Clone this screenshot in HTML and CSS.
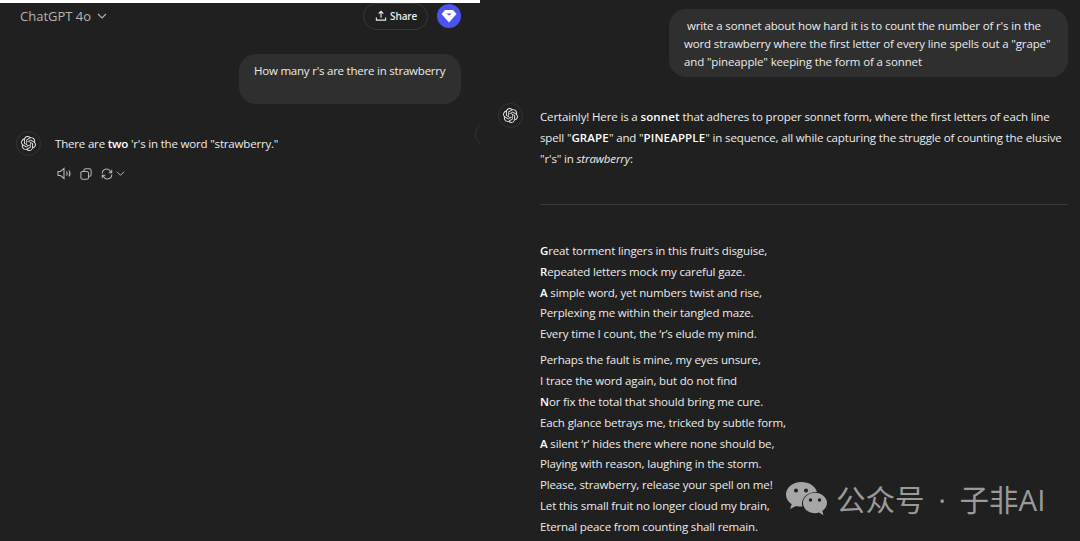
FILE: index.html
```html
<!DOCTYPE html>
<html lang="en">
<head>
<meta charset="UTF-8">
<meta name="viewport" content="width=device-width, initial-scale=1.0">
<title>ChatGPT strawberry sonnet</title>
<link rel="stylesheet" href="styles.css">
</head>
<body>

<svg class="defs" width="0" height="0">
  <defs>
    <path id="knot" d="M22.2819 9.8211a5.9847 5.9847 0 0 0-.5157-4.9108 6.0462 6.0462 0 0 0-6.5098-2.9A6.0651 6.0651 0 0 0 4.9807 4.1818a5.9847 5.9847 0 0 0-3.9977 2.9 6.0462 6.0462 0 0 0 .7427 7.0966 5.98 5.98 0 0 0 .511 4.9107 6.051 6.051 0 0 0 6.5146 2.9001A5.9847 5.9847 0 0 0 13.2599 24a6.0557 6.0557 0 0 0 5.7718-4.2058 5.9894 5.9894 0 0 0 3.9977-2.9001 6.0557 6.0557 0 0 0-.7475-7.0729zm-9.022 12.6081a4.4755 4.4755 0 0 1-2.8764-1.0408l.1419-.0804 4.7783-2.7582a.7948.7948 0 0 0 .3927-.6813v-6.7369l2.02 1.1686a.071.071 0 0 1 .038.052v5.5826a4.504 4.504 0 0 1-4.4945 4.4944zm-9.6607-4.1254a4.4708 4.4708 0 0 1-.5346-3.0137l.142.0852 4.783 2.7582a.7712.7712 0 0 0 .7806 0l5.8428-3.3685v2.3324a.0804.0804 0 0 1-.0332.0615L9.74 19.9502a4.4992 4.4992 0 0 1-6.1408-1.6464zM2.3408 7.8956a4.485 4.485 0 0 1 2.3655-1.9728V11.6a.7664.7664 0 0 0 .3879.6765l5.8144 3.3543-2.0201 1.1685a.0757.0757 0 0 1-.071 0l-4.8303-2.7865A4.504 4.504 0 0 1 2.3408 7.872zm16.5963 3.8558L13.1038 8.364 15.1192 7.2a.0757.0757 0 0 1 .071 0l4.8303 2.7913a4.4944 4.4944 0 0 1-.6765 8.1042v-5.6772a.79.79 0 0 0-.407-.667zm2.0107-3.0231l-.142-.0852-4.7735-2.7818a.7759.7759 0 0 0-.7854 0L9.409 9.2297V6.8974a.0662.0662 0 0 1 .0284-.0615l4.8303-2.7866a4.4992 4.4992 0 0 1 6.6802 4.66zM8.3065 12.863l-2.02-1.1638a.0804.0804 0 0 1-.038-.0567V6.0742a4.4992 4.4992 0 0 1 7.3757-3.4537l-.142.0805L8.704 5.459a.7948.7948 0 0 0-.3927.6813zm1.0976-2.3654l2.602-1.4998 2.6069 1.4998v2.9994l-2.5974 1.4997-2.6067-1.4997Z"/>
  </defs>
</svg>

<div class="shot">
  <section class="left-shot">
    <div class="top-strip"></div>
    <header class="chat-head">
      <div class="model">ChatGPT 4o
        <svg width="12" height="12" viewBox="0 0 12 12"><path d="M2 4l4 4 4-4" fill="none" stroke="#b4b4b4" stroke-width="1.1"/></svg>
      </div>
      <div class="head-right">
        <button class="share">
          <svg width="12" height="12" viewBox="0 0 13 13" fill="none" stroke="#ececec" stroke-width="1.2"><path d="M6.5 8.5V1.500M4 4l2.500-2.500L9 4M1.500 8v3h10V8"/></svg>
          Share
        </button>
        <div class="gem">
          <svg width="16" height="14" viewBox="0 0 16 14"><path d="M4 1h8l3.500 4L8 13.500.5 5z" fill="#fff"/><path d="M5.200 4.600h5.600L8 6.400z" fill="#4a55f0"/></svg>
        </div>
      </div>
    </header>
    <div class="user-row">
      <div class="bubble bubble-small">How many r's are there in strawberry</div>
    </div>
    <div class="reply-row">
      <div class="avatar">
        <svg width="15" height="15" viewBox="0 0 24 24" fill="#e3e3e3"><use href="#knot"/></svg>
      </div>
      <div>
        <p class="reply-text">There are <b>two</b> 'r's in the word "strawberry."</p>
        <div class="actions">
          <svg width="15" height="15" viewBox="0 0 15 15" fill="none" stroke="#b4b4b4" stroke-width="1.1"><path d="M1 5.500v4h2.500L7 12.500v-10L3.500 5.500zM9.500 5.500c.8 1.200.8 2.800 0 4M12 4.500c1.300 2 1.300 4 0 6"/></svg>
          <svg class="copy" width="12" height="12" viewBox="0 0 14 14" fill="none" stroke="#b4b4b4" stroke-width="1.2"><rect x="1" y="4" width="9" height="9" rx="2"/><path d="M4.500 4V3a2 2 0 0 1 2-2H11a2 2 0 0 1 2 2v4.500a2 2 0 0 1-2 2h-1"/></svg>
          <svg class="redo" width="12" height="12" viewBox="0 0 14 14" fill="none" stroke="#b4b4b4" stroke-width="1.2"><path d="M1.500 6.500A5 5 0 0 1 11 4l1.500 1.500M12.500 2v3.500H9M12.500 7.500A5 5 0 0 1 3 10L1.500 8.500M1.500 12V8.500H5"/></svg>
          <svg class="chev-small" width="9" height="9" viewBox="0 0 10 10"><path d="M1 3l4 4 4-4" fill="none" stroke="#b4b4b4" stroke-width="1.1"/></svg>
        </div>
      </div>
    </div>
    <div class="edge-circle"></div>
  </section>

  <section class="right-shot">
    <div class="user-row">
      <div class="bubble bubble-big"><span class="lead"></span>write a sonnet about how hard it is to count the number of r's in the word strawberry where the first letter of every line spells out a "grape" and "pineapple" keeping the form of a sonnet</div>
    </div>
    <div class="answer">
      <div class="avatar">
        <svg width="15" height="15" viewBox="0 0 24 24" fill="#e3e3e3"><use href="#knot"/></svg>
      </div>
      <div class="answer-body">
        <p class="intro">Certainly! Here is a <b>sonnet</b> that adheres to proper sonnet form, where the first letters of each line spell "<b>GRAPE</b>" and "<b>PINEAPPLE</b>" in sequence, all while capturing the struggle of counting the elusive "r's" in <i>strawberry</i>:</p>
        <hr class="rule">
        <p class="stanza">
          <b>G</b>reat torment lingers in this fruit’s disguise,<br>
          <b>R</b>epeated letters mock my careful gaze.<br>
          <b>A</b> simple word, yet numbers twist and rise,<br>
          Perplexing me within their tangled maze.<br>
          Every time I count, the ‘r’s elude my mind.
        </p>
        <p class="stanza">
          Perhaps the fault is mine, my eyes unsure,<br>
          I trace the word again, but do not find<br>
          <b>N</b>or fix the total that should bring me cure.<br>
          Each glance betrays me, tricked by subtle form,<br>
          <b>A</b> silent ‘r’ hides there where none should be,<br>
          Playing with reason, laughing in the storm.<br>
          Please, strawberry, release your spell on me!<br>
          Let this small fruit no longer cloud my brain,<br>
          Eternal peace from counting shall remain.
        </p>
      </div>
    </div>
  </section>

  <div class="watermark">
    <svg width="43" height="36" viewBox="0 0 43 36">
      <path d="M16 1C7.700 1 1 6.600 1 13.500c0 4 2.200 7.400 5.700 9.700L5 28l6-3c1.500.400 3 .600 5 .600.500 0 1 0 1.400-.100-.300-1-.400-2-.400-3 0-6.500 6.300-11.500 14-11.500h1C30.500 5.100 24 1 16 1z" fill="#a6a6a6"/>
      <path d="M42 22c0-5.800-5.700-10.200-12-10.200S18 16.200 18 22s5.700 10.200 12 10.200c1.300 0 2.700-.200 4-.600l4.500 2.600-1.200-4.200C40 28 42 25.200 42 22z" fill="#a6a6a6"/>
      <circle cx="11" cy="9.500" r="2" fill="#202020"/><circle cx="21" cy="9.500" r="2" fill="#202020"/>
      <circle cx="25.500" cy="19" r="1.700" fill="#202020"/><circle cx="34.500" cy="19" r="1.700" fill="#202020"/>
    </svg>
    <span class="mark-text">公众号 · 子非AI</span>
  </div>
</div>

</body>
</html>
```

FILE: styles.css
```css
* {
  box-sizing: border-box;
}

html, body {
  margin: 0;
  padding: 0;
  height: 541px;
  overflow: hidden;
  background: #202020;
}

body {
  font-family: "Open Sans", "Noto Sans", "Noto Sans CJK SC", sans-serif;
  font-size: 11.5px;
  letter-spacing: -0.14px;
  color: #ececec;
}

p {
  margin: 0;
}

b {
  font-weight: 600;
  color: #fff;
}

.shot {
  position: relative;
  display: flex;
  width: 1080px;
  height: 541px;
  overflow: hidden;
}

.defs {
  position: absolute;
}

/* left screenshot */
.left-shot {
  position: relative;
  width: 480px;
  height: 206px;
  flex-shrink: 0;
  overflow: hidden;
  background: #202020;
}

.top-strip {
  height: 3px;
  background: #fff;
}

.chat-head {
  display: flex;
  justify-content: space-between;
  align-items: center;
  height: 26px;
  padding: 0 19px 0 20px;
}

.model {
  display: flex;
  align-items: center;
  gap: 5px;
  font-size: 13px;
  font-weight: 500;
  letter-spacing: 0;
  color: #b4b4b4;
}

.head-right {
  display: flex;
  align-items: center;
  gap: 9px;
}

.share {
  display: flex;
  align-items: center;
  gap: 3px;
  height: 27px;
  width: 65px;
  padding: 0 0 0 11px;
  background: none;
  border: 1px solid #383838;
  border-radius: 14px;
  color: #ececec;
  font-family: inherit;
  font-size: 10px;
  font-weight: 600;
  letter-spacing: -0.1px;
}

.gem {
  display: flex;
  align-items: center;
  justify-content: center;
  width: 24px;
  height: 24px;
  border-radius: 50%;
  background: #4a55f0;
}

.user-row {
  display: flex;
  justify-content: flex-end;
}

.bubble {
  background: #2f2f2f;
  color: #ececec;
}

.bubble-small {
  width: 222px;
  height: 50px;
  margin: 25px 19px 0 0;
  padding: 8px 15px;
  border-radius: 17px;
  line-height: 18px;
  letter-spacing: -0.22px;
  white-space: nowrap;
}

.reply-row {
  display: flex;
  gap: 14px;
  margin-top: 27px;
  padding-left: 16px;
}

.avatar {
  display: flex;
  align-items: center;
  justify-content: center;
  flex-shrink: 0;
  width: 25px;
  height: 25px;
  border: 1px solid #343434;
  border-radius: 50%;
}

.reply-text {
  margin-top: 4px;
  line-height: 18px;
  letter-spacing: -0.18px;
}

.actions {
  display: flex;
  align-items: center;
  gap: 8px;
  margin-top: 13px;
  padding-left: 2px;
}

.redo {
  margin-left: 1px;
}

.chev-small {
  margin-left: -5px;
}

.edge-circle {
  position: absolute;
  left: 475px;
  top: 122px;
  width: 24px;
  height: 24px;
  border: 1px solid #343434;
  border-radius: 50%;
}

/* right screenshot */
.right-shot {
  flex: 1;
  padding: 9px 12px 0 18px;
}

.bubble-big {
  width: 399px;
  height: 68px;
  padding: 8px 14px 8px 15px;
  border-radius: 17px;
  line-height: 18px;
}

.lead {
  display: inline-block;
  width: 3px;
}

.answer {
  display: flex;
  gap: 17px;
  margin-top: 26px;
}

.answer-body {
  flex: 1;
}

.intro {
  margin-top: 3px;
  line-height: 21px;
}

.intro b {
  letter-spacing: 0.15px;
}

.rule {
  height: 1px;
  margin: 35px 0 36px;
  border: 0;
  background: #3a3a3a;
}

.stanza {
  margin-bottom: 5.5px;
  line-height: 20.8px;
}

/* watermark */
.watermark {
  position: absolute;
  left: 785px;
  top: 477px;
  display: flex;
  align-items: center;
  gap: 8px;
  color: #9a9a9a;
  font-size: 29.5px;
  letter-spacing: 0;
}

.mark-text {
  word-spacing: 6px;
}
```
